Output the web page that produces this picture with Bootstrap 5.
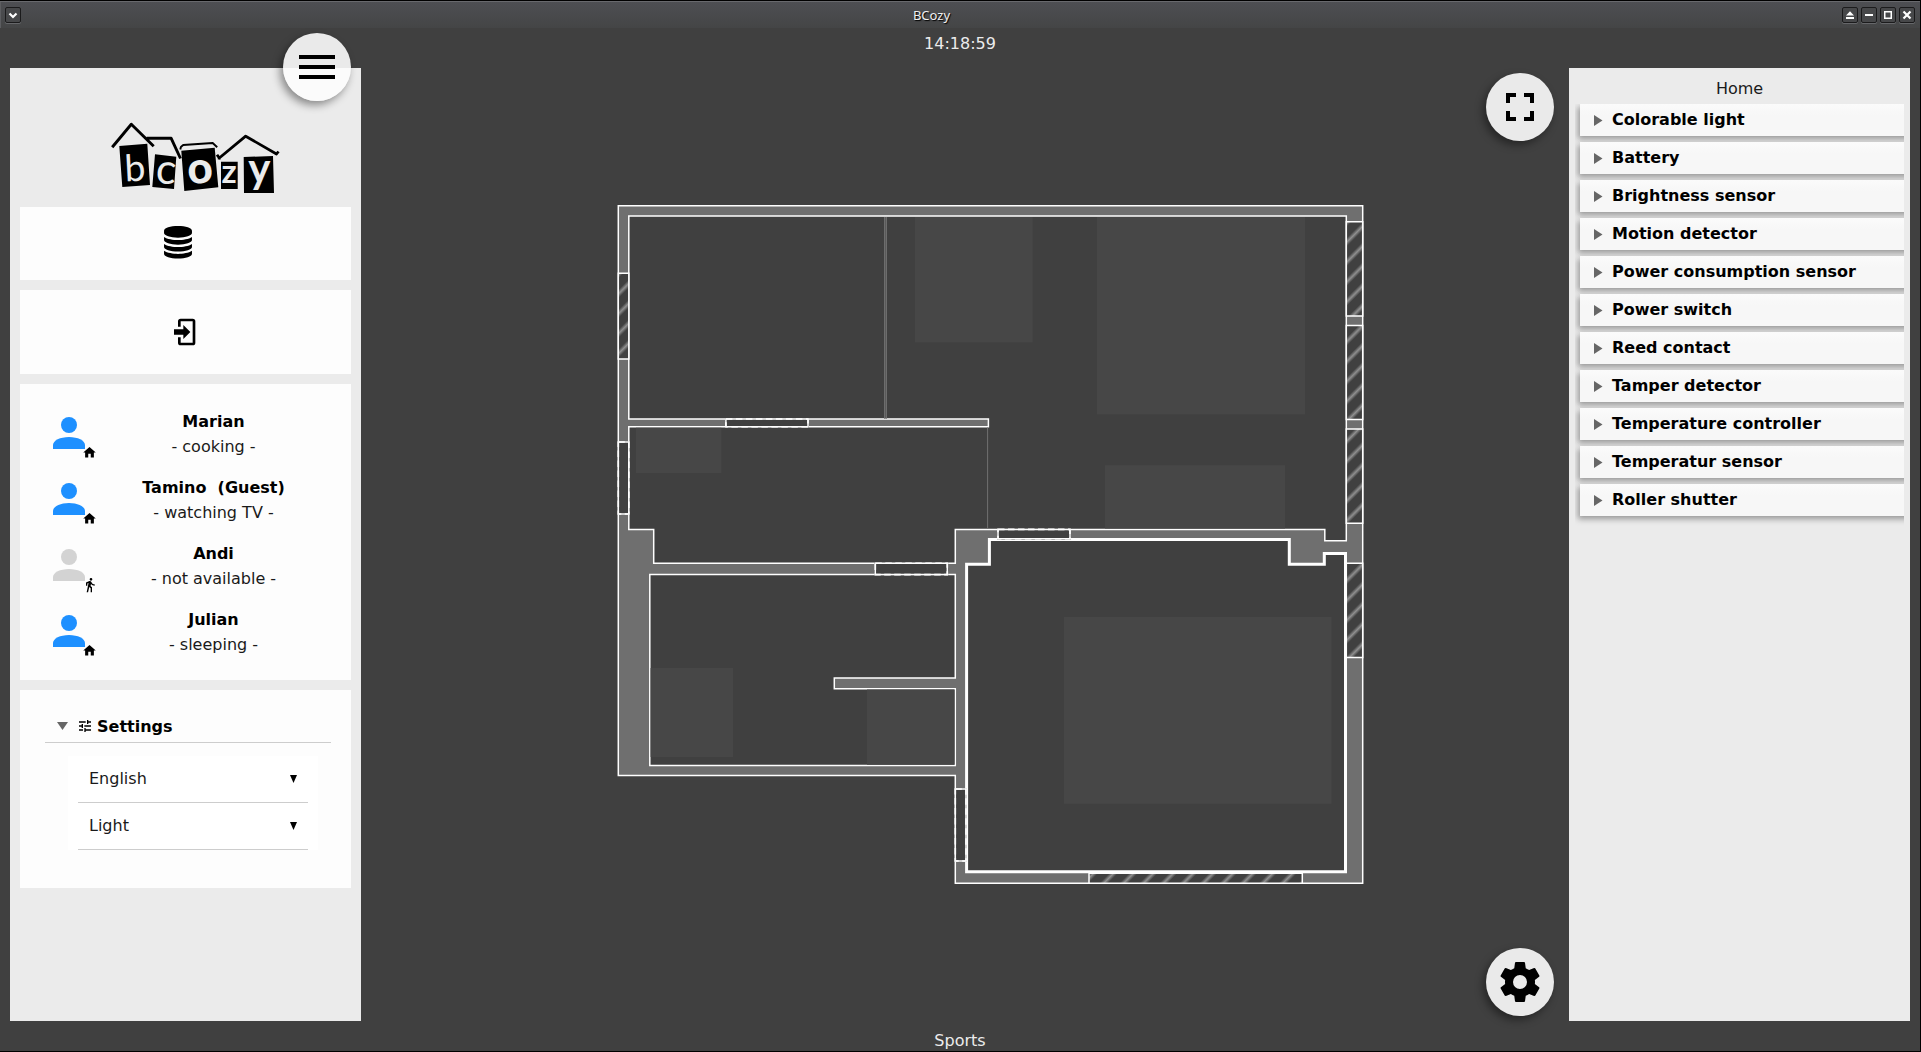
<!DOCTYPE html>
<html lang="en">
<head>
<meta charset="utf-8">
<meta name="viewport" content="width=device-width, initial-scale=1">
<title>BCozy</title>
<link rel="stylesheet" href="https://cdn.jsdelivr.net/npm/bootstrap@5.3.0/dist/css/bootstrap.min.css">
<style>
  body { background: #404040; font-family: "DejaVu Sans", sans-serif; font-size: 16px; color: #111; overflow: hidden; }
  svg { display: block; flex: none; }
  .win { height: 1052px; border-right: 1px solid #000; border-bottom: 1px solid #000; }
  .titlebar { height: 28px; padding: 0 5px 0 5px; background: linear-gradient(#4e4f53, #444546); border-top: 1px solid #000; box-shadow: inset 0 1px #68696d, inset 1px 0 #5c5d60; }
  .win-title { font: 13px/26px "Noto Sans", sans-serif; color: #f0f0f0; text-shadow: 1px 1px 1px #000; }
  .win-btn { width: 16px; height: 16px; padding: 0; border: 1px solid #1b1b1c; border-radius: 2px; background: #47484a; box-shadow: 0 1px #66676a; }
  .win-btns { gap: 3px; }
  .clock { height: 40px; line-height: 32px; color: #ececec; }
  .activity { height: 30px; line-height: 40px; color: #ececec; }
  .work { padding: 0 10px; min-height: 0; }
  .side { background: #ebebeb; }
  .side-left { width: 351px; padding: 0 10px; }
  .side-right { width: 341px; }
  .logo-box { height: 139px; padding: 50px 0 0 90px; }
  .tiles { gap: 10px; }
  .tile { background: #fdfdfd; }
  .tile-db { height: 73px; padding: 0 16px 2px 0; }
  .tile-login { height: 84px; }
  .tile-users { height: 296px; padding: 17px 17px 0 25px; }
  .tile-settings { height: 198px; padding: 20px 20px 0 25px; }
  .user-row { height: 66px; padding-top: 8px; line-height: 25px; color: #1a1a1a; }
  .user-row strong { color: #000; white-space: pre; }
  .avatar { width: 48px; height: 48px; color: #1e90ff; }
  .avatar.away { color: #d3d3d3; }
  .presence { position: absolute; left: 37px; top: 36px; color: #000; }
  .set-head { height: 33px; line-height: 33px; border-bottom: 1px solid #cdcdcd; padding-left: 12px; color: #000; }
  .set-list { margin: 13px 13px 0 23px; padding: 0 10px; background: #fff; }
  .set-row { height: 47px; border-bottom: 1px solid #cdcdcd; padding: 0 11px 0 11px; color: #1a1a1a; }
  .fab { position: absolute; width: 68px; height: 68px; border-radius: 50%; padding: 10px; border: 0; background: rgba(253,253,253,.9); box-shadow: -3px 4px 8px rgba(0,0,0,.42); }
  .fab-menu { left: 283px; top: 33px; }
  .fab-full { right: 15px; top: 5px; }
  .fab-gear { right: 15px; bottom: 5px; }
  .home-title { height: 36px; padding-top: 6px; line-height: 30px; color: #1a1a1a; }
  .dev-clip { margin: 0 6px; padding: 0 0 14px 5px; overflow: hidden; }
  .dev-list { gap: 6px; margin-right: -12px; }
  .dev { height: 32px; line-height: 32px; padding-left: 14px; gap: 9px; font-weight: 700; color: #000; background: linear-gradient(#fbfbfb, #f7f7f7 35%); box-shadow: -2px 3px 6px rgba(0,0,0,.36); }
  .logo text { font-family: Lato, sans-serif; fill: #ebebeb; text-anchor: middle; }
</style>
</head>
<body>
<div class="win d-flex flex-column position-relative">
  <header class="titlebar d-flex align-items-center flex-none">
    <button class="win-btn" aria-label="Window menu"><svg width="14" height="14" viewBox="0 0 14 14"><path d="M3.5 5.5 7 9l3.500-3.500" fill="none" stroke="#fff" stroke-width="2.200"/></svg></button>
    <div class="win-title flex-grow-1 text-center">BCozy</div>
    <div class="win-btns d-flex">
      <button class="win-btn" aria-label="Keep above"><svg width="14" height="14" viewBox="0 0 14 14"><path d="M3 7.500h8L7 3.300zM3 9h8v2H3z" fill="#fff"/></svg></button>
      <button class="win-btn" aria-label="Minimize"><svg width="14" height="14" viewBox="0 0 14 14"><path d="M3 6h8v2H3z" fill="#fff"/></svg></button>
      <button class="win-btn" aria-label="Maximize"><svg width="14" height="14" viewBox="0 0 14 14"><path d="M3.750 3.750h6.500v6.500h-6.500z" fill="none" stroke="#fff" stroke-width="1.500"/></svg></button>
      <button class="win-btn" aria-label="Close"><svg width="14" height="14" viewBox="0 0 14 14"><path d="m3.500 3.500 7 7m0-7-7 7" fill="none" stroke="#fff" stroke-width="2.200"/></svg></button>
    </div>
  </header>

  <div class="clock text-center">14:18:59</div>

  <div class="work d-flex flex-grow-1">
    <aside class="side side-left">
      <div class="logo-box">
        <svg class="logo" width="172" height="78" viewBox="100 118 172 78" role="img" aria-label="bcozy">
          <path d="M109.300 146l28-2.300 2.700 41.300-27.700 2zM145 154.300l21.300 2.400-2.300 32.300-21.700-2zM171.300 150.700l33.400-3 3.600 39.600-34 3.700zM211 161.700h16.700V189H211zM233.700 157l29.300-1 1 37h-30z"/>
          <g fill="none" stroke="#000" stroke-width="2.900" stroke-linejoin="round">
            <path d="M102.200 147.200l19.100-23 22.400 22M136.700 138.300H161.200l9.300 20.200"/>
            <path d="M207 154.800l2.300 3.200 26.400-21.800 30.800 17.800 2-2.500M209.300 158l-.3 1.500" stroke-width="2.800"/>
            <path d="M170.300 149.500l.6-2.500 2.300-2 29.500-2 4.500 4.300" stroke-width="1.900"/>
          </g>
          <text font-size="37" transform="translate(125.500 181) rotate(-3)">b</text>
          <text font-size="42" transform="translate(155 183.500) rotate(5)">c</text>
          <text font-size="44" font-weight="900" transform="translate(191 183) rotate(-4)">o</text>
          <text font-size="33" font-weight="700" x="219" y="182.500">z</text>
          <text font-size="42" font-weight="700" x="249.300" y="183">y</text>
        </svg>
      </div>
      <div class="tiles d-flex flex-column">
        <div class="tile tile-db d-flex align-items-center justify-content-center">
          <svg width="28" height="32.600" viewBox="0 0 24 28"><path d="M12 12c4.188 0 9.344-.766 12-2.641V12c0 2.203-5.375 4-12 4S0 14.203 0 12V9.359C2.656 11.234 7.812 12 12 12zm0 12c4.188 0 9.344-.766 12-2.641V24c0 2.203-5.375 4-12 4S0 26.203 0 24v-2.641C2.656 23.234 7.812 24 12 24zm0-6c4.188 0 9.344-.766 12-2.641V18c0 2.203-5.375 4-12 4S0 20.203 0 18v-2.641C2.656 17.234 7.812 18 12 18zM12 0c6.625 0 12 1.797 12 4v2c0 2.203-5.375 4-12 4S0 8.203 0 6V4c0-2.203 5.375-4 12-4z"/></svg>
        </div>
        <div class="tile tile-login d-flex align-items-center justify-content-center">
          <svg width="32" height="32" viewBox="0 0 24 24"><path d="M10 17.250V14H3v-4h7V6.750L15.250 12 10 17.250M8 2h9a2 2 0 0 1 2 2v16a2 2 0 0 1-2 2H8a2 2 0 0 1-2-2v-4h2v4h9V4H8v4H6V4a2 2 0 0 1 2-2z"/></svg>
        </div>
        <div class="tile tile-users">
          <div class="user-row d-flex">
            <div class="avatar position-relative"><svg width="48" height="48" viewBox="0 0 24 24" fill="currentColor"><use href="#person"/></svg><svg class="presence" width="15" height="15" viewBox="0 0 24 24"><use href="#house"/></svg></div>
            <div class="flex-grow-1 text-center"><strong>Marian</strong><br>- cooking -</div>
          </div>
          <div class="user-row d-flex">
            <div class="avatar position-relative"><svg width="48" height="48" viewBox="0 0 24 24" fill="currentColor"><use href="#person"/></svg><svg class="presence" width="15" height="15" viewBox="0 0 24 24"><use href="#house"/></svg></div>
            <div class="flex-grow-1 text-center"><strong>Tamino  (Guest)</strong><br>- watching TV -</div>
          </div>
          <div class="user-row d-flex">
            <div class="avatar away position-relative"><svg width="48" height="48" viewBox="0 0 24 24" fill="currentColor"><use href="#person"/></svg><svg class="presence" width="16" height="16" viewBox="0 0 24 24"><path d="M13.500 5.500c1.100 0 2-.9 2-2s-.9-2-2-2-2 .9-2 2 .9 2 2 2zM9.800 8.900L7 23h2.100l1.800-8 2.100 2v6h2v-7.500l-2.100-2 .6-3C14.800 12 16.800 13 19 13v-2c-1.900 0-3.500-1-4.300-2.400l-1-1.600c-.4-.6-1-1-1.700-1-.3 0-.5.1-.8.1L6 8.300V13h2V9.600l1.800-.7"/></svg></div>
            <div class="flex-grow-1 text-center"><strong>Andi</strong><br>- not available -</div>
          </div>
          <div class="user-row d-flex">
            <div class="avatar position-relative"><svg width="48" height="48" viewBox="0 0 24 24" fill="currentColor"><use href="#person"/></svg><svg class="presence" width="15" height="15" viewBox="0 0 24 24"><use href="#house"/></svg></div>
            <div class="flex-grow-1 text-center"><strong>Julian</strong><br>- sleeping -</div>
          </div>
        </div>
        <div class="tile tile-settings">
          <div class="set-head d-flex align-items-center fw-bold">
            <svg width="11" height="8" viewBox="0 0 11 8"><path d="M0 0h11L5.500 8z" fill="#666"/></svg>
            <svg width="16" height="16" viewBox="0 0 24 24" style="margin:0 4px 0 9px"><path d="M3 17v2h6v-2H3M3 5v2h10V5H3m10 16v-2h8v-2h-8v-2h-2v6h2M7 9v2H3v2h4v2h2V9H7m14 4v-2H11v2h10m-6-4h2V7h4V5h-4V3h-2v6z"/></svg>
            <span>Settings</span>
          </div>
          <div class="set-list">
            <div class="set-row d-flex align-items-center justify-content-between"><span>English</span><svg width="7" height="8" viewBox="0 0 7 8"><path d="M0 0h7L3.500 8z"/></svg></div>
            <div class="set-row d-flex align-items-center justify-content-between"><span>Light</span><svg width="7" height="8" viewBox="0 0 7 8"><path d="M0 0h7L3.500 8z"/></svg></div>
          </div>
        </div>
      </div>
    </aside>

    <main class="flex-grow-1 position-relative">
      <svg width="1208" height="953" viewBox="361 68 1208 953">
        <defs>
          <linearGradient id="hatch" gradientUnits="userSpaceOnUse" x1="451.200" y1="451.200" x2="461.150" y2="461.150" spreadMethod="repeat">
            <stop offset="0" stop-color="#404040"/><stop offset=".28" stop-color="#404040"/><stop offset=".5" stop-color="#8f8f8f"/><stop offset=".72" stop-color="#404040"/><stop offset="1" stop-color="#404040"/>
          </linearGradient>
          <g id="person"><circle cx="12" cy="8" r="4"/><path d="M12 14c4.420 0 8 1.790 8 4v2H4v-2c0-2.210 3.580-4 8-4z"/></g>
          <path id="house" d="M10 20v-6h4v6h5v-8h3L12 3 2 12h3v8h5z"/>
        </defs>
        <!-- walls, with the rooms cut out -->
        <path fill="#6f6f6f" stroke="#fff" stroke-width="1.500" fill-rule="evenodd" d="M618.300 205.800H1362.700V883.300H955.300V775.600H618.300z
          M628.800 216H1346.300V540.800H1324.800V529.400H955.300V563.200H653.700V529.400H628.800V426.800H988.400V419H628.800z
          M649.800 574.600H955.300V678H834.300V688.700H955.300V765.400H649.800z"/>
        <path fill="#404040" stroke="#fff" stroke-width="3" d="M966.600 564.200H989.400V539.400H1289.300V564.200H1324.300V553.600H1345.500V871.800H966.600z"/>
        <path d="M885.500 217V418.500" stroke="#5a5a5a" stroke-width="3"/><path d="M884.500 217V418.500M886.500 217V418.500" stroke="#727272" stroke-width=".8"/>
        <path d="M987.600 427.500V529" stroke="#707070"/>
        <!-- furniture areas -->
        <path fill="#474747" d="M915 217h117.700v125.300H915zM1097 217h208v197.300h-208zM1105 465.300h180v63.300h-180zM636 427.700h85.300V473H636zM650.600 668H733v89h-82.400zM867 689.500h87.500v75.200H867zM1064 617h267.500v186.700H1064z"/>
        <!-- windows -->
        <g fill="url(#hatch)" stroke="#fff" stroke-width="1.500">
          <path d="M618.300 273.300h10.500V359h-10.500zM1346.300 221.700h16.400V316h-16.400zM1346.300 325.600h16.400v94h-16.400zM1346.300 429h16.400v94.200h-16.400zM1346.300 563.200h16.400v94.200h-16.400zM1089 873.200h213.300v10.100H1089z"/>
        </g>
        <!-- doors -->
        <g fill="#404040" stroke="#404040" stroke-width="1.700">
          <path id="doors" d="M725.900 419H808v7.800h-82.100zM618.300 442h10.500v72h-10.500zM875.300 563.200h72v11.400h-72zM998 529.400h72v9.400h-72zM955.300 789h10.700v72h-10.700z"/>
        </g>
        <use href="#doors" fill="none" stroke="#fff" stroke-width="1.500"/>
        <g fill="none" stroke="#fff" stroke-width="1.600" stroke-dasharray="6.500 3.500">
          <path d="M725.900 419H808v7.800h-82.100zM618.300 442h10.500v72h-10.500zM875.300 563.200h72v11.400h-72zM998 529.400h72v9.400h-72zM955.300 789h10.700v72h-10.700z"/>
        </g>
      </svg>
      <button class="fab fab-full" aria-label="Fullscreen"><svg width="48" height="48" viewBox="0 0 24 24"><path d="M7 14H5v5h5v-2H7v-3zm-2-4h2V7h3V5H5v5zm12 7h-3v2h5v-5h-2v3zM14 5v2h3v3h2V5h-5z"/></svg></button>
      <button class="fab fab-gear" aria-label="Settings"><svg width="48" height="48" viewBox="0 0 24 24"><path d="M12,15.5A3.5,3.5 0 0,1 8.5,12A3.5,3.5 0 0,1 12,8.5A3.5,3.5 0 0,1 15.5,12A3.5,3.5 0 0,1 12,15.5M19.43,12.97C19.47,12.65 19.5,12.33 19.5,12C19.5,11.67 19.47,11.34 19.43,11L21.54,9.37C21.73,9.22 21.78,8.95 21.66,8.73L19.66,5.27C19.54,5.05 19.27,4.96 19.05,5.05L16.56,6.05C16.04,5.66 15.5,5.32 14.87,5.07L14.5,2.42C14.46,2.18 14.25,2 14,2H10C9.75,2 9.54,2.18 9.5,2.42L9.13,5.07C8.5,5.32 7.96,5.66 7.44,6.05L4.95,5.05C4.73,4.96 4.46,5.05 4.34,5.27L2.34,8.73C2.21,8.95 2.27,9.22 2.46,9.37L4.57,11C4.53,11.34 4.5,11.67 4.5,12C4.5,12.33 4.53,12.65 4.57,12.97L2.46,14.63C2.27,14.78 2.21,15.05 2.34,15.27L4.34,18.73C4.46,18.95 4.73,19.03 4.95,18.95L7.44,17.94C7.96,18.34 8.5,18.68 9.13,18.93L9.5,21.58C9.54,21.82 9.75,22 10,22H14C14.25,22 14.46,21.82 14.5,21.58L14.87,18.93C15.5,18.67 16.04,18.34 16.56,17.94L19.05,18.95C19.27,19.03 19.54,18.95 19.66,18.73L21.66,15.27C21.78,15.05 21.73,14.78 21.54,14.63L19.43,12.97Z"/></svg></button>
    </main>

    <aside class="side side-right">
      <div class="home-title text-center">Home</div>
      <div class="dev-clip">
        <div class="dev-list d-flex flex-column" id="devices">
          <div class="dev d-flex align-items-center"><svg width="9" height="11" viewBox="0 0 9 11"><path d="M0 0v11l8.500-5.500z" fill="#666"/></svg>Colorable light</div>
          <div class="dev d-flex align-items-center"><svg width="9" height="11" viewBox="0 0 9 11"><path d="M0 0v11l8.500-5.500z" fill="#666"/></svg>Battery</div>
          <div class="dev d-flex align-items-center"><svg width="9" height="11" viewBox="0 0 9 11"><path d="M0 0v11l8.500-5.500z" fill="#666"/></svg>Brightness sensor</div>
          <div class="dev d-flex align-items-center"><svg width="9" height="11" viewBox="0 0 9 11"><path d="M0 0v11l8.500-5.500z" fill="#666"/></svg>Motion detector</div>
          <div class="dev d-flex align-items-center"><svg width="9" height="11" viewBox="0 0 9 11"><path d="M0 0v11l8.500-5.500z" fill="#666"/></svg>Power consumption sensor</div>
          <div class="dev d-flex align-items-center"><svg width="9" height="11" viewBox="0 0 9 11"><path d="M0 0v11l8.500-5.500z" fill="#666"/></svg>Power switch</div>
          <div class="dev d-flex align-items-center"><svg width="9" height="11" viewBox="0 0 9 11"><path d="M0 0v11l8.500-5.500z" fill="#666"/></svg>Reed contact</div>
          <div class="dev d-flex align-items-center"><svg width="9" height="11" viewBox="0 0 9 11"><path d="M0 0v11l8.500-5.500z" fill="#666"/></svg>Tamper detector</div>
          <div class="dev d-flex align-items-center"><svg width="9" height="11" viewBox="0 0 9 11"><path d="M0 0v11l8.500-5.500z" fill="#666"/></svg>Temperature controller</div>
          <div class="dev d-flex align-items-center"><svg width="9" height="11" viewBox="0 0 9 11"><path d="M0 0v11l8.500-5.500z" fill="#666"/></svg>Temperatur sensor</div>
          <div class="dev d-flex align-items-center"><svg width="9" height="11" viewBox="0 0 9 11"><path d="M0 0v11l8.500-5.500z" fill="#666"/></svg>Roller shutter</div>
        </div>
      </div>
    </aside>
  </div>

  <div class="activity text-center">Sports</div>

  <button class="fab fab-menu" aria-label="Menu"><svg width="48" height="48" viewBox="0 0 24 24"><path d="M3 18h18v-2H3v2zm0-5h18v-2H3v2zm0-7v2h18V6H3z"/></svg></button>
</div>
<script src="https://cdn.jsdelivr.net/npm/bootstrap@5.3.0/dist/js/bootstrap.bundle.min.js"></script>
</body>
</html>
